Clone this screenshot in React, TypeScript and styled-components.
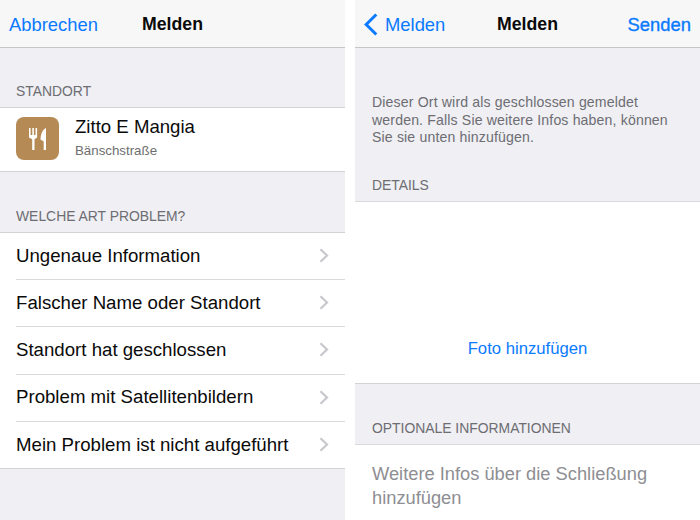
import React from "react";
import styled, { createGlobalStyle } from "styled-components";

const Global = createGlobalStyle`
  html, body { margin: 0; padding: 0; background: #fff; }
  body { font-family: "Liberation Sans", Arial, sans-serif; -webkit-font-smoothing: antialiased; }
`;

const Stage = styled.div`
  width: 700px;
  height: 520px;
  display: flex;
  justify-content: space-between;
  overflow: hidden;
  background: #fff;
`;

const Phone = styled.div`
  width: 345px;
  height: 520px;
  background: #efeff4;
  display: flex;
  flex-direction: column;
  overflow: hidden;
`;

const NavBar = styled.div`
  flex: none;
  box-sizing: border-box;
  padding: 2px 9px 0;
  height: 48px;
  background: #f7f7f8;
  border-bottom: 1px solid #c6c6ca;
  display: grid;
  grid-template-columns: 1fr auto 1fr;
  align-items: center;
`;

const NavTitle = styled.div`
  font-size: 17.7px;
  font-weight: 700;
  color: #0a0a0a;
  text-align: center;
`;

const NavAction = styled.div<{ $end?: boolean }>`
  font-size: 18.4px;
  color: #0a7aff;
  display: flex;
  align-items: center;
  gap: 7px;
  justify-content: ${(p) => (p.$end ? "flex-end" : "flex-start")};
  -webkit-text-stroke: ${(p) => (p.$end ? "0.35px #0a7aff" : "0")};
`;

const SectionLabel = styled.div<{ $top: number; $inset?: number }>`
  margin-top: ${(p) => p.$top}px;
  padding: 0 ${(p) => p.$inset ?? 16}px;
  font-size: 13.9px;
  line-height: 14px;
  color: #6d6d72;
  height: 16px;
`;

const Group = styled.div<{ $gap: number }>`
  margin-top: ${(p) => p.$gap}px;
  background: #fff;
  border-top: 1px solid #d3d3d6;
  border-bottom: 1px solid #d3d3d6;
`;

const PlaceRow = styled.div`
  box-sizing: border-box;
  height: 63px;
  display: flex;
  align-items: center;
  gap: 16px;
  padding: 0 16px 2px;
`;

const PlaceIcon = styled.div`
  width: 43px;
  height: 43px;
  border-radius: 8px;
  background: #b58a54;
  display: flex;
  align-items: center;
  justify-content: center;
  flex: none;
`;

const PlaceText = styled.div`
  display: flex;
  flex-direction: column;
  gap: 5px;
  margin-top: -3px;
`;

const PlaceName = styled.div`
  font-size: 18.6px;
  line-height: 22px;
  color: #0a0a0a;
`;

const PlaceStreet = styled.div`
  font-size: 13.3px;
  line-height: 15px;
  color: #6e6e6e;
`;

const Row = styled.div`
  box-sizing: border-box;
  height: 47.2px;
  margin-left: 16px;
  padding: 0 16px 1px 0;
  display: flex;
  align-items: center;
  justify-content: space-between;
  font-size: 18.65px;
  color: #0a0a0a;
  border-bottom: 1px solid #d9d9dc;
  &:last-child {
    height: 46.3px;
    padding-bottom: 0;
    border-bottom: none;
  }
`;

const Note = styled.div`
  margin-top: 46px;
  padding: 0 17px;
  font-size: 14.1px;
  line-height: 17.5px;
  color: #6d6d72;
  letter-spacing: 0.15px;
  white-space: nowrap;
`;

const PhotoBox = styled.div`
  margin-top: 7px;
  height: 183px;
  background: #fff;
  border-top: 1px solid #d9d9dc;
  border-bottom: 1px solid #d3d3d6;
  display: flex;
  align-items: flex-end;
  justify-content: center;
  padding-bottom: 24px;
  box-sizing: border-box;
  font-size: 16.7px;
  line-height: 20px;
  color: #0a7aff;
`;

const NoteBox = styled.div`
  margin-top: 7px;
  flex: 1;
  background: #fff;
  border-top: 1px solid #d9d9dc;
  padding: 17px 17px 0;
  font-size: 18.3px;
  line-height: 24px;
  color: #8e8e93;
`;

const Fork = () => (
  <svg width="20" height="24" viewBox="0 0 20 24" fill="#fff">
    <path d="M1 1h1.6v7H4.3V1H5.9v7H7.5V1h1.6v9.5L6.5 12.3V23H4.2V12.3L1 10.5z" />
    <path d="M18 1v22h-2.3v-8.5L12.5 12.5C12.8 7 14.5 2.5 18 1z" />
  </svg>
);

const Chevron = () => (
  <svg width="10" height="15" viewBox="0 0 10 15" fill="none" stroke="#c7c7cc" strokeWidth="2.2">
    <path d="M1.5 1.2 8 7.5 1.5 13.8" />
  </svg>
);

const BackChevron = () => (
  <svg width="14" height="23" viewBox="0 0 14 23" fill="none" stroke="#0a7aff" strokeWidth="3">
    <path d="M12.3 1.5 2.2 11.5l10.1 10" />
  </svg>
);

const problems = [
  "Ungenaue Information",
  "Falscher Name oder Standort",
  "Standort hat geschlossen",
  "Problem mit Satellitenbildern",
  "Mein Problem ist nicht aufgeführt",
];

export default function App() {
  return (
    <Stage>
      <Global />
      <Phone>
        <NavBar>
          <NavAction>Abbrechen</NavAction>
          <NavTitle>Melden</NavTitle>
          <span />
        </NavBar>
        <SectionLabel $top={36}>STANDORT</SectionLabel>
        <Group $gap={7}>
          <PlaceRow>
            <PlaceIcon><Fork /></PlaceIcon>
            <PlaceText>
              <PlaceName>Zitto E Mangia</PlaceName>
              <PlaceStreet>Bänschstraße</PlaceStreet>
            </PlaceText>
          </PlaceRow>
        </Group>
        <SectionLabel $top={37}>WELCHE ART PROBLEM?</SectionLabel>
        <Group $gap={7}>
          {problems.map((p) => (
            <Row key={p}>
              {p}
              <Chevron />
            </Row>
          ))}
        </Group>
      </Phone>
      <Phone>
        <NavBar>
          <NavAction>
            <BackChevron />
            Melden
          </NavAction>
          <NavTitle>Melden</NavTitle>
          <NavAction $end>Senden</NavAction>
        </NavBar>
        <Note>
          Dieser Ort wird als geschlossen gemeldet
          <br />
          werden. Falls Sie weitere Infos haben, können
          <br />
          Sie sie unten hinzufügen.
        </Note>
        <SectionLabel $top={31} $inset={17}>DETAILS</SectionLabel>
        <PhotoBox>Foto hinzufügen</PhotoBox>
        <SectionLabel $top={37} $inset={17}>OPTIONALE INFORMATIONEN</SectionLabel>
        <NoteBox>
          Weitere Infos über die Schließung
          <br />
          hinzufügen
        </NoteBox>
      </Phone>
    </Stage>
  );
}
